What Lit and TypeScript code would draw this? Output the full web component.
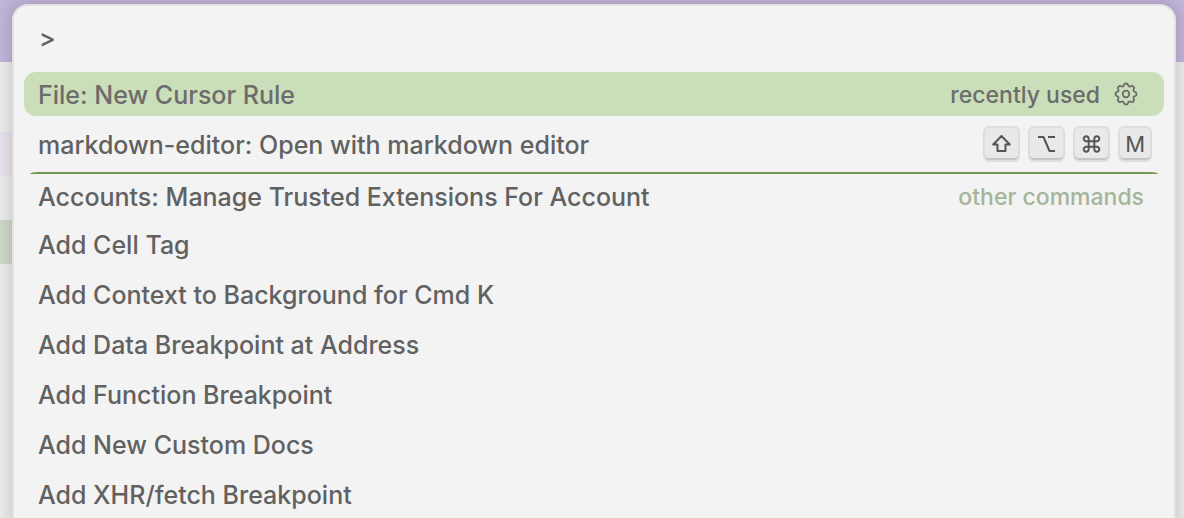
import { LitElement, html, css, svg, nothing } from "lit";
import { customElement, property, state } from "lit/decorators.js";

interface Command {
  label: string;
  group?: string;
  keys?: string[];
  separator?: boolean;
}

const COMMANDS: Command[] = [
  { label: "File: New Cursor Rule", group: "recently used" },
  { label: "markdown-editor: Open with markdown editor", keys: ["shift", "option", "command", "M"] },
  { label: "Accounts: Manage Trusted Extensions For Account", group: "other commands", separator: true },
  { label: "Add Cell Tag" },
  { label: "Add Context to Background for Cmd K" },
  { label: "Add Data Breakpoint at Address" },
  { label: "Add Function Breakpoint" },
  { label: "Add New Custom Docs" },
  { label: "Add XHR/fetch Breakpoint" },
];

const KEY_ICONS: Record<string, unknown> = {
  shift: svg`<path d="M10 2 L18.3 10.5 H14 V17 H6 V10.5 H1.7 Z" />`,
  option: svg`<path d="M1.5 3 H7 L13 17 H18.5 M11.5 3 H18.5" />`,
  command: svg`<path d="M7.2 7.2 H12.8 V12.8 H7.2 Z M7.2 7.2 H4.8 A2.5 2.5 0 1 1 7.2 4.8 Z M12.8 7.2 V4.8 A2.5 2.5 0 1 1 15.2 7.2 Z M12.8 12.8 H15.2 A2.5 2.5 0 1 1 12.8 15.2 Z M7.2 12.8 V15.2 A2.5 2.5 0 1 1 4.8 12.8 Z" />`,
};

/* Outline of an eight-toothed gear centred on (12, 12). */
function gearPath(): string {
  const teeth = 8;
  const point = (radius: number, degrees: number) => {
    const a = (degrees * Math.PI) / 180;
    return `${(12 + radius * Math.sin(a)).toFixed(2)} ${(12 - radius * Math.cos(a)).toFixed(2)}`;
  };
  let d = `M${point(9.6, -11)}`;
  for (let i = 0; i < teeth; i++) {
    const a = i * 45;
    d += ` Q${point(10.9, a - 7)} ${point(10.3, a)}`;
    d += ` Q${point(10.9, a + 7)} ${point(9.6, a + 11)}`;
    d += ` Q${point(7.0, a + 22.5)} ${point(9.6, a + 34)}`;
  }
  return d + " Z";
}

@customElement("key-cap")
class KeyCap extends LitElement {
  @property() key = "";

  static styles = css`
    :host {
      display: flex;
    }
    .cap {
      display: flex;
      align-items: center;
      justify-content: center;
      box-sizing: border-box;
      height: 36px;
      padding: 0 5px;
      border: 2px solid #dddddd;
      border-radius: 6px;
      background: #e9e9e9;
      box-shadow: inset 0 -2px 0 #c6c6c6;
      color: #555555;
      font: 22px/32px Inter, "Liberation Sans", sans-serif;
    }
    svg {
      width: 23px;
      height: 20px;
      fill: none;
      stroke: currentColor;
      stroke-width: 2;
      stroke-linejoin: round;
    }
  `;

  render() {
    const icon = KEY_ICONS[this.key];
    return html`<kbd class="cap"
      >${icon ? html`<svg viewBox="0 0 20 20" role="img" aria-label=${this.key}>${icon}</svg>` : this.key}</kbd
    >`;
  }
}

@customElement("command-row")
class CommandRow extends LitElement {
  @property({ attribute: false }) command!: Command;
  @property({ type: Boolean }) selected = false;

  static styles = css`
    :host {
      display: block;
    }
    .rule {
      height: 2px;
      margin: 0 6px;
      border-radius: 8px 8px 0 0 / 2px 2px 0 0;
      background: #72984d;
    }
    .row {
      display: flex;
      align-items: center;
      gap: 14px;
      box-sizing: border-box;
      height: 44px;
      padding: 0 12px 0 14px;
      border-radius: 12px;
      color: #616161;
    }
    .selected {
      background: #cadeb9;
      color: #6c6c6c;
    }
    .separated {
      height: 42px;
      padding-top: 2px;
      padding-right: 20px;
    }
    button {
      padding: 0;
      border: 0;
      background: none;
      color: inherit;
      font: inherit;
      cursor: pointer;
    }
    .label {
      flex: 1;
      min-width: 0;
      padding-top: 2px;
      overflow: hidden;
      text-align: left;
      text-overflow: ellipsis;
      white-space: nowrap;
      line-height: 36px;
    }
    .group {
      padding-top: 2px;
      font-size: 23px;
      color: #a5b599;
      white-space: nowrap;
    }
    .selected .group {
      color: inherit;
    }
    .gear {
      display: flex;
      margin-right: 14px;
    }
    .gear svg {
      width: 24px;
      height: 24px;
      fill: none;
      stroke: currentColor;
      stroke-width: 1.8;
      stroke-linejoin: round;
    }
    .keys {
      display: flex;
      gap: 8px;
    }
  `;

  render() {
    const { label, group, keys, separator } = this.command;
    return html`
      ${separator ? html`<div class="rule"></div>` : nothing}
      <div class="row ${this.selected ? "selected" : ""} ${separator ? "separated" : ""}">
        <button class="label">${label}</button>
        ${group ? html`<span class="group">${group}</span>` : nothing}
        ${this.selected
          ? html`<button class="gear" aria-label="Configure keybinding">
              <svg viewBox="0 0 24 24"><path d=${gearPath()} /><circle cx="12" cy="12" r="3.3" /></svg>
            </button>`
          : nothing}
        ${keys ? html`<span class="keys">${keys.map((k) => html`<key-cap .key=${k}></key-cap>`)}</span>` : nothing}
      </div>
    `;
  }
}

@customElement("app-root")
class AppRoot extends LitElement {
  @state() private selected = 0;

  static styles = css`
    :host {
      display: grid;
      height: 100vh;
      overflow: hidden;
      background: #ececec;
      font: 450 25px/36px Inter, "Liberation Sans", sans-serif;
      font-optical-sizing: none;
    }
    .backdrop,
    .palette {
      grid-area: 1 / 1;
    }
    .titlebar {
      height: 62px;
      background: #c1b5da;
    }
    .sidebar {
      display: grid;
      gap: 44px;
      width: 40px;
      padding-top: 70px;
    }
    .item {
      height: 44px;
      background: #e8e2ed;
    }
    .item.active {
      background: #cfd9c8;
    }
    .palette {
      position: relative;
      margin: 4px 8px 0 12px;
      padding: 10px 10px 0;
      border: 2px solid #e2e2e2;
      border-bottom: 0;
      border-radius: 16px 16px 0 0;
      background: #f3f3f3;
      box-shadow: 0 0 16px 2px rgba(0, 0, 0, 0.16);
    }
    .query {
      display: block;
      box-sizing: border-box;
      width: 100%;
      height: 44px;
      margin-bottom: 12px;
      padding: 0 15px;
      border: 0;
      outline: 0;
      background: none;
      color: #616161;
      font: inherit;
    }
    .list {
      display: grid;
      gap: 6px;
      margin: 0;
      padding: 0 0 10px;
      list-style: none;
    }
  `;

  render() {
    return html`
      <div class="backdrop">
        <div class="titlebar"></div>
        <div class="sidebar">
          <div class="item"></div>
          <div class="item active"></div>
        </div>
      </div>
      <main class="palette">
        <input class="query" type="text" aria-label="Command" .value=${">"} spellcheck="false" />
        <ul class="list">
          ${COMMANDS.map(
            (c, i) => html`<li @click=${() => (this.selected = i)}>
              <command-row .command=${c} ?selected=${i === this.selected}></command-row>
            </li>`
          )}
        </ul>
      </main>
    `;
  }
}
